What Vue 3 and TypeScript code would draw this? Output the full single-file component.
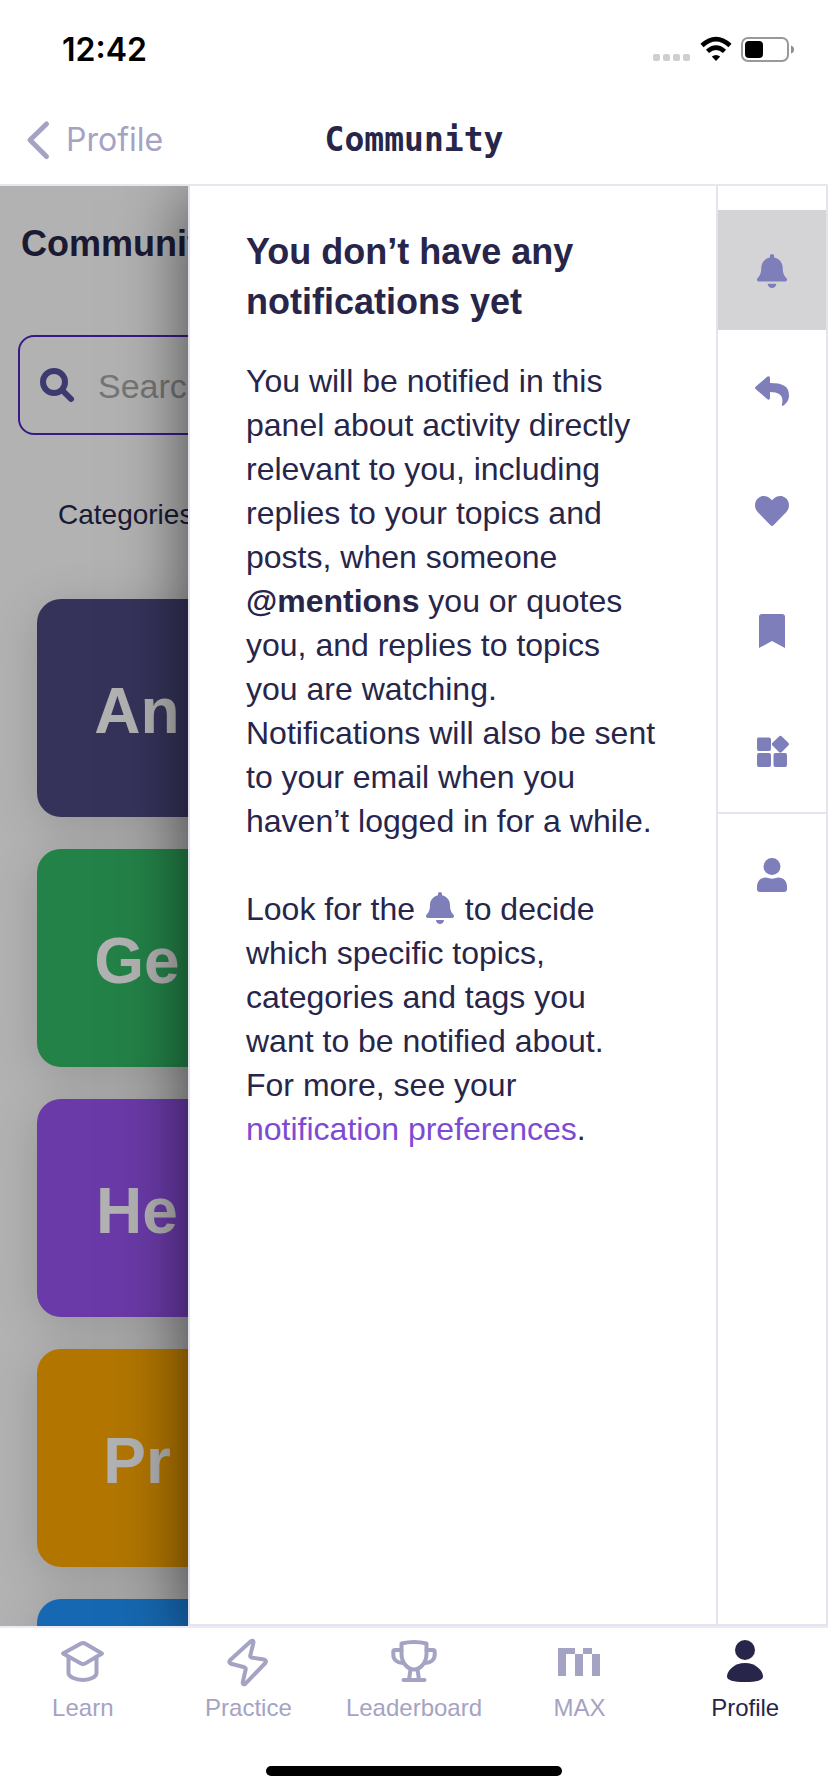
<script setup lang="ts">
interface Category {
  abbr: string
  tone: string
}

interface RailItem {
  id: string
  label: string
  width: number
  height: number
  viewBox: string
  path: string
}

const bellPath =
  'M224 512c35.32 0 63.97-28.65 63.97-64H160.03c0 35.35 28.65 64 63.97 64zm215.39-149.71c-19.32-20.76-55.47-51.99-55.47-154.29 0-77.7-54.48-139.9-127.94-155.16V32c0-17.67-14.32-32-31.98-32s-31.98 14.33-31.98 32v20.84C118.56 68.1 64.08 130.3 64.08 208c0 102.3-36.15 133.53-55.47 154.29-6 6.45-8.66 14.16-8.61 21.71.11 16.4 12.98 32 32.1 32h383.8c19.12 0 32-15.6 32.1-32 .05-7.55-2.61-15.27-8.61-21.71z'

const categories: Category[] = [
  { abbr: 'An', tone: 'indigo' },
  { abbr: 'Ge', tone: 'green' },
  { abbr: 'He', tone: 'violet' },
  { abbr: 'Pr', tone: 'amber' },
  { abbr: '', tone: 'blue' },
]

const railItems: RailItem[] = [
  { id: 'all', label: 'All notifications', width: 30, height: 34, viewBox: '0 0 448 512', path: bellPath },
  {
    id: 'replies',
    label: 'Replies',
    width: 34,
    height: 30,
    viewBox: '0 0 34 30',
    path: 'M.6 10.8 12.4.6Q14.8-.7 15 1.8V7C27.500 7 34 10 34 19.500 34 24 31.500 27.500 28 29.800 27.100 30.200 26.700 29.800 26.900 29 29 19.800 25 16.200 15 16V21.800Q14.800 24.600 12.400 23.200L.6 13Q-.5 11.900.6 10.800Z',
  },
  {
    id: 'likes',
    label: 'Likes',
    width: 34,
    height: 30,
    viewBox: '0 32 512 448',
    path: 'M462.3 62.6C407.5 15.9 326 24.3 275.7 76.2L256 96.5l-19.7-20.3C186.1 24.3 104.5 15.9 49.7 62.6c-62.8 53.6-66.1 149.8-9.9 207.9l193.5 199.8c12.5 12.9 32.8 12.9 45.3 0l193.5-199.8c56.3-58.1 53-154.3-9.8-207.9z',
  },
  {
    id: 'bookmarks',
    label: 'Bookmarks',
    width: 26,
    height: 34,
    viewBox: '0 0 26 34',
    path: 'M3 0H23Q26 0 26 3V34L13 27 0 34V3Q0 0 3 0Z',
  },
  {
    id: 'other',
    label: 'Other notifications',
    width: 34,
    height: 34,
    viewBox: '0 0 34 34',
    path: 'M3.500 3.500H14Q16 3.500 16 5.500V15Q16 17 14 17H4Q2 17 2 15V5.500Q2 3.500 3.500 3.500ZM4 19H14Q16 19 16 21V31Q16 33 14 33H4Q2 33 2 31V21Q2 19 4 19ZM20.500 19H30Q32 19 32 21V31Q32 33 30 33H20.500Q18.500 33 18.500 31V21Q18.500 19 20.500 19ZM24 2.400Q25.400 1 26.800 2.400L33.300 8.800Q34.600 10.200 33.300 11.500L26.800 18Q25.400 19.300 24 18L17.500 11.500Q16.200 10.200 17.500 8.800Z',
  },
]

const tabs: string[] = ['Learn', 'Practice', 'Leaderboard', 'MAX', 'Profile']
</script>

<template>
  <div class="screen">
    <div class="status">
      <time class="clock">12:42</time>
      <div class="indicators">
        <svg class="signal" width="38" height="26" viewBox="0 0 38 26" aria-hidden="true">
          <rect x="0" y="17" width="7" height="7" rx="2" />
          <rect x="10" y="17" width="7" height="7" rx="2" />
          <rect x="20" y="17" width="7" height="7" rx="2" />
          <rect x="30" y="17" width="7" height="7" rx="2" />
        </svg>
        <svg width="32" height="26" viewBox="0 0 32 26" aria-hidden="true">
          <path class="arc" d="M2 8.500Q16-4.300 30 8.500M7.500 14.400Q16 6.800 24.500 14.400" />
          <path d="M11.800 19.600Q16 16.400 20.200 19.600L16 24Z" />
        </svg>
        <svg width="54" height="26" viewBox="0 0 54 26" aria-hidden="true">
          <rect class="shell" x="1" y="1" width="46" height="23" rx="6" />
          <rect x="4" y="4" width="18" height="17" rx="4" />
          <path class="nub" d="M50 8.500Q53 9.500 53 12.500T50 16.500Z" />
        </svg>
      </div>
    </div>

    <header class="navbar">
      <button class="back" type="button">
        <svg width="24" height="40" viewBox="0 0 24 40" aria-hidden="true">
          <path d="M20.500 4 4 20 20.500 36.500" />
        </svg>
        Profile
      </button>
      <span class="nav-title">Community</span>
    </header>

    <main class="stage">
      <div class="page">
        <h1>Community</h1>
        <label class="search">
          <svg width="34" height="34" viewBox="0 0 34 34" aria-hidden="true">
            <circle cx="14" cy="14" r="11" />
            <path d="M23 23 31 31" />
          </svg>
          <input type="search" placeholder="Search" aria-label="Search topics" />
        </label>
        <p class="section">Categories</p>
        <div class="cards">
          <article v-for="c in categories" :key="c.tone" class="card" :class="c.tone">
            <span class="abbr">{{ c.abbr }}</span>
          </article>
        </div>
      </div>
      <div class="scrim"></div>

      <aside class="drawer">
        <section class="notice">
          <h2>You don’t have any<br />notifications yet</h2>
          <p>
            You will be notified in this<br />panel about activity directly<br />relevant to you, including<br />replies
            to your topics and<br />posts, when someone<br /><strong>@mentions</strong> you or quotes<br />you, and
            replies to topics<br />you are watching.<br />Notifications will also be sent<br />to your email when
            you<br />haven’t logged in for a while.
          </p>
          <p>
            Look for the
            <svg class="inline-bell" width="28" height="32" viewBox="0 0 448 512" role="img" aria-label="bell">
              <path :d="bellPath" />
            </svg>
            to decide<br />which specific topics,<br />categories and tags you<br />want to be notified about.<br />For
            more, see your<br /><a href="#preferences">notification preferences</a>.
          </p>
        </section>

        <nav class="rail" aria-label="Panel sections">
          <div class="rail-group">
            <button
              v-for="(item, i) in railItems"
              :key="item.id"
              type="button"
              :class="{ active: i === 0 }"
              :aria-label="item.label"
            >
              <svg :width="item.width" :height="item.height" :viewBox="item.viewBox" preserveAspectRatio="none">
                <path :d="item.path" />
              </svg>
            </button>
          </div>
          <button type="button" aria-label="Account">
            <svg width="30" height="34" viewBox="0 0 30 34">
              <circle cx="15" cy="8.500" r="8.500" />
              <path d="M9 19.500Q15 21.800 21 19.500C27 19.500 30 23.500 30 29V31Q30 34 27 34H3Q0 34 0 31V29C0 23.500 3 19.500 9 19.500Z" />
            </svg>
          </button>
        </nav>
      </aside>
    </main>

    <nav class="tabbar" aria-label="Main">
      <div class="tabs">
        <button v-for="tab in tabs" :key="tab" type="button" :class="{ current: tab === 'Profile' }">
          <svg width="48" height="48" viewBox="0 0 48 48" aria-hidden="true">
            <g v-if="tab === 'Learn'" class="line">
              <path d="M4 15.500 22 5.600Q24 4.600 26 5.600L43 15.500 26 25.600Q24 26.700 22 25.600Z" />
              <path d="M9.500 19V35C9.500 38.500 16 42 24 42S37.500 38.500 37.500 35V19" />
            </g>
            <g v-else-if="tab === 'Practice'" class="line">
              <path d="M26.800 3.200 6 22.300Q4.200 24.600 7 25.800L20.500 29.300Q22 29.800 21.700 31.300L18.700 44.500Q18.800 47.400 21.500 45.700L41.300 25Q43 22.600 40.300 21.500L27.300 19.600Q26 19.200 26.200 17.800L29.500 4.600Q29.500 1.800 26.800 3.200Z" />
            </g>
            <g v-else-if="tab === 'Leaderboard'" class="line">
              <path d="M11.500 5.500Q24 2.500 36.500 5.500V16C36.500 25 30 31.500 24 31.500S11.500 25 11.500 16Z" />
              <path d="M11.500 12H5Q3.300 12 3.300 13.700V16.500C3.300 21.500 7 24.800 12.500 25" />
              <path d="M36.500 12H43Q44.700 12 44.700 13.700V16.500C44.700 21.500 41 24.800 35.500 25" />
              <path d="M20.500 31.500 19 41.500M27.500 31.500 29 41.500M13.500 42H34.500" />
            </g>
            <path v-else-if="tab === 'MAX'" d="M2 10H19V16H10V38H2ZM19 16H27V38H19ZM27 10H36V16H27ZM36 16H44V38H36Z" />
            <g v-else>
              <circle cx="24" cy="12" r="10" />
              <path d="M24 25C35 25 42 33 42 38.500Q42 44 24 44T6 38.500C6 33 13 25 24 25Z" />
            </g>
          </svg>
          <span>{{ tab }}</span>
        </button>
      </div>
      <div class="home-indicator"></div>
    </nav>
  </div>
</template>

<style>
body {
  margin: 0;
  background: #fff;
}
</style>

<style scoped>
.screen {
  display: flex;
  flex-direction: column;
  height: 100vh;
  background: #fff;
  color: #27264a;
  font-family: 'Liberation Sans', Arial, sans-serif;
  overflow: hidden;
}

button {
  margin: 0;
  padding: 0;
  border: 0;
  background: none;
  font: inherit;
  color: inherit;
  cursor: pointer;
}

svg {
  display: block;
  flex: none;
  overflow: visible;
  fill: currentColor;
}

.status {
  display: flex;
  justify-content: space-between;
  box-sizing: border-box;
  height: 96px;
  padding: 30px 33px 0 62px;
  color: #000;
}

.clock {
  font: 600 32px/40px Inter, sans-serif;
}

.indicators {
  display: flex;
  gap: 9px;
  padding-top: 7px;
}

.signal {
  fill: #cfcfcf;
}

.arc {
  fill: none;
  stroke: #000;
  stroke-width: 4.6;
}

.shell {
  fill: none;
  stroke: #999;
  stroke-width: 2;
}

.nub {
  fill: #8e8e8e;
}

.navbar {
  display: grid;
  grid-template-columns: 1fr auto 1fr;
  align-items: center;
  height: 88px;
  padding: 0 26px;
  border-bottom: 2px solid #e6e6ef;
}

.back {
  display: flex;
  align-items: center;
  justify-self: start;
  gap: 16px;
  color: #a5a3c3;
  font: 400 32px/40px Inter, sans-serif;
}

.back svg {
  fill: none;
  stroke: currentColor;
  stroke-width: 5;
  stroke-linecap: round;
  stroke-linejoin: round;
}

.nav-title {
  font: 700 33px/40px 'DejaVu Sans Mono', monospace;
}

.stage {
  position: relative;
  flex: 1;
  min-height: 0;
  overflow: hidden;
}

.page {
  padding: 36px 18px 0;
}

.page h1 {
  margin: 0 0 69px;
  padding-left: 3px;
  font-size: 36px;
  line-height: 44px;
}

.search {
  display: flex;
  align-items: center;
  gap: 24px;
  box-sizing: border-box;
  height: 100px;
  padding: 0 20px;
  border: 2px solid #5425c0;
  border-radius: 16px;
  color: #5654a0;
}

.search svg {
  fill: none;
  stroke: currentColor;
  stroke-width: 6;
  stroke-linecap: round;
}

.search input {
  flex: 1;
  min-width: 0;
  padding: 2px 0 0;
  border: 0;
  outline: 0;
  background: none;
  font: 34px/40px 'Liberation Sans', Arial, sans-serif;
}

.search input::placeholder {
  color: #a8a8a8;
  opacity: 1;
}

.section {
  margin: 58px 0 62px;
  padding-left: 40px;
  font-size: 28px;
  line-height: 44px;
}

.cards {
  display: flex;
  flex-direction: column;
  gap: 32px;
  padding: 0 19px;
}

.card {
  display: flex;
  align-items: center;
  height: 218px;
  border-radius: 24px;
  box-shadow: 0 8px 48px rgba(0, 0, 0, 0.16);
  color: #fff;
}

.abbr {
  width: 200px;
  padding-top: 6px;
  text-align: center;
  font-size: 64px;
  font-weight: 700;
}

.indigo {
  background: #4c4a82;
}

.green {
  background: #33ba66;
}

.violet {
  background: #9953f1;
}

.amber {
  background: #fa0;
}

.blue {
  background: #2096ff;
}

.scrim {
  position: absolute;
  inset: 0;
  background: rgba(0, 0, 0, 0.3);
}

.drawer {
  position: absolute;
  inset: 0 0 0 188px;
  display: flex;
  box-sizing: border-box;
  border: 2px solid #e4e4f0;
  border-top: 0;
  background: #fff;
  box-shadow: 0 12px 64px rgba(0, 0, 0, 0.6);
}

.notice {
  flex: 1;
  min-width: 0;
  padding: 41px 40px 0 56px;
}

.notice h2 {
  margin: 0 0 32px;
  font-size: 36px;
  line-height: 50px;
}

.notice p {
  margin: 0 0 44px;
  font-size: 32px;
  line-height: 44px;
}

.notice a {
  color: #7d4bd3;
  text-decoration: none;
}

.inline-bell {
  display: inline-block;
  height: 32px;
  margin: 0 2px;
  color: #7d7eba;
  vertical-align: -4px;
}

.rail {
  width: 108px;
  padding-top: 24px;
  border-left: 2px solid #e4e4f0;
  color: #7d7eba;
}

.rail button {
  display: flex;
  align-items: center;
  justify-content: center;
  box-sizing: border-box;
  width: 100%;
  height: 120px;
  padding-top: 2px;
}

.rail .active {
  background: #d4d4d6;
}

.rail-group {
  padding-bottom: 2px;
  border-bottom: 2px solid #e4e4f0;
}

.tabbar {
  display: flex;
  flex-direction: column;
  align-items: center;
  justify-content: space-between;
  box-sizing: border-box;
  height: 166px;
  padding: 10px 0 16px;
  border-top: 2px solid #ebebf5;
}

.tabs {
  display: grid;
  grid-template-columns: repeat(5, 1fr);
  width: 100%;
}

.tabs button {
  display: flex;
  flex-direction: column;
  align-items: center;
  gap: 8px;
  color: #a5a3c3;
  font-size: 24px;
  line-height: 28px;
}

.tabs .current {
  color: #27264a;
}

.line {
  fill: none;
  stroke: currentColor;
  stroke-width: 4;
  stroke-linecap: round;
  stroke-linejoin: round;
}

.home-indicator {
  width: 296px;
  height: 10px;
  border-radius: 5px;
  background: #000;
}
</style>
